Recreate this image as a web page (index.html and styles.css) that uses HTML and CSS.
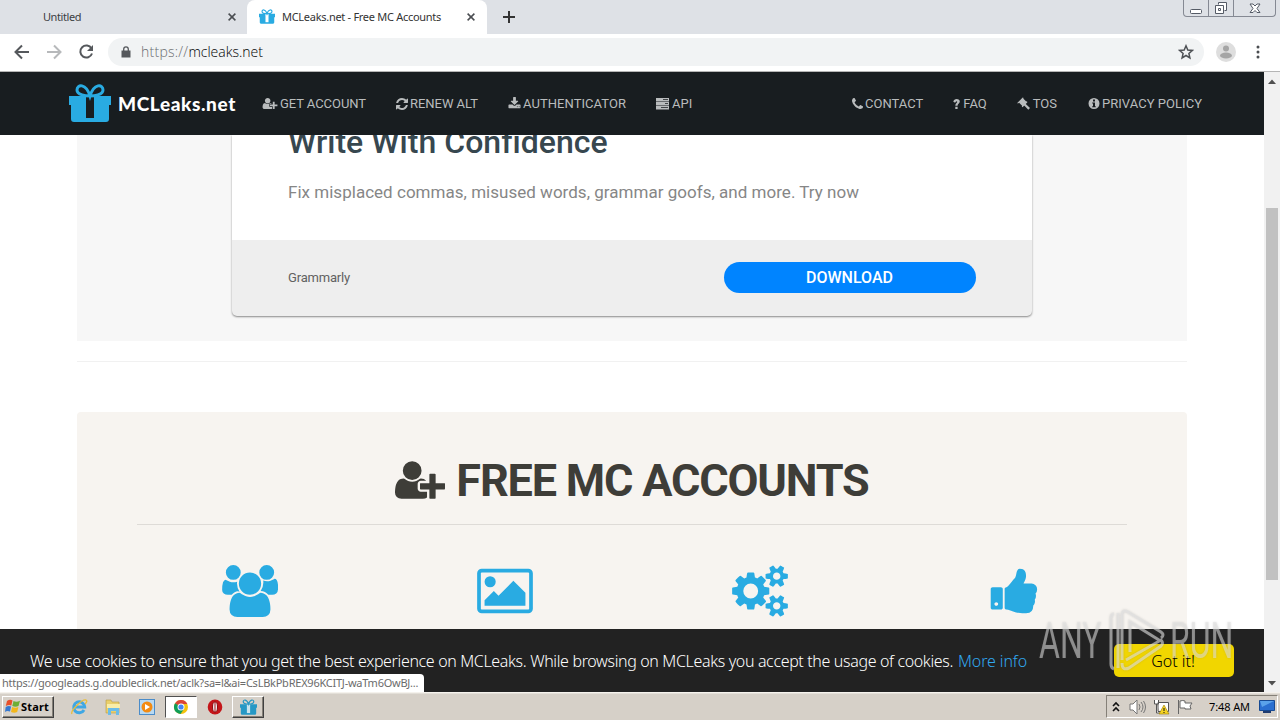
FILE: index.html
```html
<!DOCTYPE html>
<html lang="en"><head><meta charset="utf-8"><title>MCLeaks.net - Free MC Accounts</title><link rel="stylesheet" href="styles.css"></head>
<body>
<svg class="defs" aria-hidden="true">
<symbol id="userplus" viewBox="0 0 2048 1792"><path d="M704 896q-159 0-271.5-112.5t-112.5-271.5 112.5-271.5 271.5-112.5 271.5 112.5 112.5 271.5-112.5 271.5-271.5 112.5zm960 128h352q13 0 22.5 9.5t9.5 22.5v192q0 13-9.5 22.5t-22.5 9.5h-352v352q0 13-9.5 22.5t-22.5 9.5h-192q-13 0-22.5-9.5t-9.5-22.5v-352h-352q-13 0-22.5-9.5t-9.5-22.5v-192q0-13 9.5-22.5t22.5-9.5h352v-352q0-13 9.5-22.5t22.5-9.5h192q13 0 22.5 9.5t9.5 22.5v352zm-736 224q0 52 38 90t90 38h256v238q-68 50-171 50h-874q-121 0-194-69t-73-190q0-53 3.5-103.5t14-109 26.5-108.5 43-97.5 62-81 85.5-53.5 111.5-20q19 0 39 17 79 61 154.500 91.500t164.500 30.500 164.500-30.500 154.500-91.500q20-17 39-17 132 0 217 96h-223q-52 0-90 38t-38 90v192z"/></symbol>
<symbol id="gift" viewBox="0 0 42 38"><path fill="currentColor" d="M0 12h17v4h8v-4h17v9h-2v14q0 3-3 3H5q-3 0-3-3V21H0z"/><path d="M17 13h8v21h-8z" class="ribbon"/><path d="M21 12C17 12 8 11 8 6 8 0 17-1 21 12C25-1 34 0 34 6 34 11 25 12 21 12z" fill="none" stroke="currentColor" stroke-width="3"/></symbol>
</svg>
<header class="tabs">
  <div class="tab idle"><span class="t-untitled">Untitled</span><svg class="close" viewBox="0 0 8 8"><path d="M.6.6l6.800 6.800M7.400.6L.6 7.400"/></svg></div>
  <div class="tab active"><svg class="fav"><use href="#gift"/></svg><span class="t-title">MCLeaks.net - Free MC Accounts</span><svg class="close" viewBox="0 0 8 8"><path d="M.6.6l6.800 6.800M7.400.6L.6 7.400"/></svg></div>
  <svg class="plus" viewBox="0 0 12 12"><path d="M6 0v12M0 6h12"/></svg>
  <div class="winbtns">
    <div><svg width="12" height="14"><rect x=".5" y="8.500" width="11" height="4" rx="1"/></svg></div>
    <div><svg width="14" height="14"><path d="M4.500 3.500v-2h8v8h-2M1.500 4.500h8v8h-8zM4.500 7.500h2v2h-2z"/></svg></div>
    <div class="wide"><svg width="12" height="14"><path d="M1 3h3l2 2 2-2h3L8 7.500l3 4H8l-2-2-2 2H1l3-4z"/></svg></div>
  </div>
</header>
<div class="toolbar">
  <svg class="nav-ic" width="16" height="16" viewBox="0 0 16 16"><path d="M15 8H2M8 1.500L1.500 8 8 14.500"/></svg>
  <svg class="nav-ic dim" width="16" height="16" viewBox="0 0 16 16"><path d="M1 8h13M8 1.500L14.500 8 8 14.500"/></svg>
  <svg class="nav-ic" width="16" height="16" viewBox="0 0 16 16"><path d="M13.500 4.500A6 6 0 1 0 14 9.500"/><path class="solid" d="M15 1v6H9z"/></svg>
  <div class="omni"><svg class="lock" width="10" height="12" viewBox="0 0 10 12"><path d="M.5 4.500h9v7h-9z"/><path class="line" d="M2.700 5V3.200a2.300 2.300 0 0 1 4.600 0V5"/></svg><span class="t-url"><i>https://</i>mcleaks.net</span>
  <svg class="star" width="16" height="16" viewBox="0 0 16 16"><path d="M8 1.800l1.800 4.200 4.500.4-3.400 3 1 4.500L8 11.500l-3.900 2.400 1-4.500-3.400-3 4.500-.4z"/></svg></div>
  <svg class="avatar" width="20" height="20" viewBox="0 0 20 20"><circle cx="10" cy="10" r="10" fill="#dedede"/><circle cx="10" cy="6.500" r="3" fill="#a5a5a5"/><ellipse cx="10" cy="13.500" rx="6" ry="3" fill="#a5a5a5"/></svg>
  <svg class="dots" width="4" height="14" viewBox="0 0 4 14"><circle cx="2" cy="2" r="1.500"/><circle cx="2" cy="7" r="1.500"/><circle cx="2" cy="12" r="1.500"/></svg>
</div>
<main class="view">
 <div class="page">
  <nav class="navbar">
    <svg class="logo"><use href="#gift"/></svg><span class="brand">MCLeaks.net</span>
    <a class="item l1"><svg width="16" height="13"><use href="#userplus"/></svg><span>GET ACCOUNT</span></a>
    <a class="item l2"><svg width="12" height="12" viewBox="128 128 1536 1536"><path d="M1639 1056q0 5-1 7-64 268-268 434.500t-478 166.500q-146 0-282.500-55t-243.500-157l-129 129q-19 19-45 19t-45-19-19-45v-448q0-26 19-45t45-19h448q26 0 45 19t19 45-19 45l-137 137q71 66 161 102t187 36q134 0 250-65t186-179q11-17 53-117 8-23 30-23h192q13 0 22.500 9.500t9.500 22.500zm25-800v448q0 26-19 45t-45 19h-448q-26 0-45-19t-19-45 19-45l138-138q-148-137-349-137-134 0-250 65t-186 179q-11 17-53 117-8 23-30 23h-199q-13 0-22.500-9.500t-9.500-22.500v-7q65-268 270-434.500t480-166.500q146 0 284 55.500t245 156.500l130-129q19-19 45-19t45 19 19 45z"/></svg><span>RENEW ALT</span></a>
    <a class="item l3"><svg width="13" height="13" viewBox="0 0 1792 1792"><path d="M1344 1344q0-26-19-45t-45-19-45 19-19 45 19 45 45 19 45-19 19-45zm256 0q0-26-19-45t-45-19-45 19-19 45 19 45 45 19 45-19 19-45zm128-224v320q0 40-28 68t-68 28h-1472q-40 0-68-28t-28-68v-320q0-40 28-68t68-28h465l135 136q58 56 136 56t136-56l136-136h464q40 0 68 28t28 68zm-325-569q17 41-14 70l-448 448q-18 19-45 19t-45-19l-448-448q-31-29-14-70 17-39 59-39h256v-448q0-26 19-45t45-19h256q26 0 45 19t19 45v448h256q42 0 59 39z"/></svg><span>AUTHENTICATOR</span></a>
    <a class="item l4"><svg width="13" height="13" viewBox="0 0 13 13"><path fill-rule="evenodd" d="M0 1h13v3.400H0zM0 5h13v3.400H0zM0 9h13v3.400H0zM7 2.300v.8h5v-.8zM9 6.300v.8h3v-.8zM5 10.300v.8h7v-.8z"/></svg><span>API</span></a>
    <a class="item r1"><svg width="11" height="12" viewBox="192 128 1408 1536"><path d="M1600 1240q0 27-10 70.500t-21 68.500q-21 50-122 106-94 51-186 51-27 0-53-3.500t-57.500-12.500-47-14.500-55.500-20.500-49-18q-98-35-175-83-127-79-264-216t-216-264q-48-77-83-175-3-9-18-49t-20.500-55.500-14.500-47-12.500-57.500-3.500-53q0-92 51-186 56-101 106-122 25-11 68.500-21t70.500-10q14 0 21 3 18 6 53 76 11 19 30 54t35 63.500 31 53.500q3 4 17.500 25t21.500 35.500 7 28.500q0 20-28.500 50t-62 55-62 53-28.500 46q0 9 5 22.500t8.500 20.500 14 24 11.500 19q76 137 174 235t235 174q2 1 19 11.500t24 14 20.500 8.500 22.500 5q18 0 46-28.500t53-62 55-62 50-28.500q14 0 28.500 7t35.500 21.500 25 17.500q25 15 53.500 31t63.500 35 54 30q70 35 76 53 3 7 3 21z"/></svg><span>CONTACT</span></a>
    <a class="item r2"><svg width="7" height="13" viewBox="0 0 7 13"><path d="M2.300 9.800h2.300v2.200H2.300zM.3 4.800Q1 2 3.600 2 6.800 2.100 6.800 4.600 6.800 6 5.300 7 4.600 7.500 4.600 8.800H2.300Q2.200 7 3.500 6.100 4.500 5.300 4.100 4.500 3 3.700 2.100 5.800z"/></svg><span>FAQ</span></a>
    <a class="item r3"><svg width="13" height="13" viewBox="0 0 13 13"><path d="M0 6.200L5.700.5l1 .5-.5.6 3 3 .7-.4.500 1-4.800 5-.8-.7.300-.7-3-3-.7.500zM8 6.200l5 4.700-1.700 1.800-4.800-5z"/></svg><span>TOS</span></a>
    <a class="item r4"><svg width="12" height="13" viewBox="0 0 12 13"><path fill-rule="evenodd" d="M6 1a5.500 5.500 0 1 1 0 11A5.500 5.500 0 0 1 6 1zM5 2.500v2h2v-2zM4.200 5.400v1H5v2.800h-.8v1h3.600v-1H7V5.400z"/></svg><span>PRIVACY POLICY</span></a>
  </nav>
  <section class="ad"><div class="card"><div class="copy"><h2>Write With Confidence</h2><p>Fix misplaced commas, misused words, grammar goofs, and more. Try now</p></div>
  <div class="foot"><span class="adv">Grammarly</span><div class="dl">DOWNLOAD</div></div></div></section>
  <hr class="rule">
  <section class="jumbo">
    <h1><svg><use href="#userplus"/></svg><span>FREE MC ACCOUNTS</span></h1>
    <div class="cols">
      <div><svg width="56" height="52" viewBox="0 0 1920 1792"><path d="M593 896q-162 5-265 128h-134q-82 0-138-40.500t-56-118.500q0-353 124-353 6 0 43.500 21t97.500 42.500 119 21.500q67 0 133-23-5 37-5 66 0 159 93 293zm1071 637q0 120-73 189.500t-194 69.500h-874q-121 0-194-69.500t-73-189.500q0-53 3.500-103.500t14-109 26.500-108.500 43-97.500 62-81 85.500-53.500 111.500-20q10 0 43 21.500t73 48 107 48 135 21.500 135-21.500 107-48 73-48 43-21.500q61 0 111.500 20t85.500 53.500 62 81 43 97.500 26.500 108.500 14 109 3.500 103.500zm-1024-1277q0 106-75 181t-181 75-181-75-75-181 75-181 181-75 181 75 75 181zm704 384q0 159-112.500 271.500t-271.500 112.500-271.500-112.500-112.500-271.500 112.500-271.500 271.500-112.500 271.500 112.500 112.500 271.500zm576 225q0 78-56 118.500t-138 40.500h-134q-103-123-265-128 93-134 93-293 0-29-5-66 66 23 133 23 59 0 119-21.500t97.500-42.500 43.500-21q124 0 124 353zm-128-609q0 106-75 181t-181 75-181-75-75-181 75-181 181-75 181 75 75 181z"/></svg></div>
      <div><svg width="56" height="52" viewBox="0 -128 1920 1792"><path d="M640 448q0 80-56 136t-136 56-136-56-56-136 56-136 136-56 136 56 56 136zm1024 384v448h-1408v-192l320-320 160 160 512-512zm96-704h-1600q-13 0-22.500 9.500t-9.500 22.500v1216q0 13 9.500 22.500t22.500 9.500h1600q13 0 22.500-9.500t9.500-22.500v-1216q0-13-9.500-22.500t-22.500-9.500zm160 32v1216q0 66-47 113t-113 47h-1600q-66 0-113-47t-47-113v-1216q0-66 47-113t113-47h1600q66 0 113 47t47 113z"/></svg></div>
      <div><svg width="56" height="52" viewBox="0 0 1920 1792"><path d="M896 896q0-106-75-181t-181-75-181 75-75 181 75 181 181 75 181-75 75-181zm768 512q0-52-38-90t-90-38-90 38-38 90q0 53 37.500 90.500t90.500 37.500 90.500-37.500 37.500-90.500zm0-1024q0-52-38-90t-90-38-90 38-38 90q0 53 37.500 90.500t90.500 37.500 90.500-37.500 37.500-90.500zm-384 421v185q0 10-7 19.500t-16 10.500l-155 24q-11 35-32 76 34 48 90 115 7 11 7 20 0 12-7 19-23 30-82.500 89.500t-78.500 59.500q-11 0-21-7l-115-90q-37 19-77 31-11 108-23 155-7 24-30 24h-186q-11 0-20-7.500t-10-17.500l-23-153q-34-10-75-31l-118 89q-7 7-20 7-11 0-21-8-144-133-144-160 0-9 7-19 10-14 41-53t47-61q-23-44-35-82l-152-24q-10-1-17-9.500t-7-19.500v-185q0-10 7-19.500t16-10.500l155-24q11-35 32-76-34-48-90-115-7-11-7-20 0-12 7-20 22-30 82-89t79-59q11 0 21 7l115 90q34-18 77-32 11-108 23-154 7-24 30-24h186q11 0 20 7.500t10 17.500l23 153q34 10 75 31l118-89q8-7 20-7 11 0 21 8 144 133 144 160 0 8-7 19-12 16-42 54t-45 60q23 48 34 82l152 23q10 2 17 10.500t7 19.500zm640 533v140q0 16-149 31-12 27-30 52 51 113 51 138 0 4-4 7-122 71-124 71-8 0-46-47t-52-68q-20 2-30 2t-30-2q-14 21-52 68t-46 47q-2 0-124-71-4-3-4-7 0-25 51-138-18-25-30-52-149-15-149-31v-140q0-16 149-31 13-29 30-52-51-113-51-138 0-4 4-7 4-2 35-20t59-34 30-16q8 0 46 46.500t52 67.500q20-2 30-2t30 2q51-71 92-112l6-2q4 0 124 70 4 3 4 7 0 25-51 138 17 23 30 52 149 15 149 31zm0-1024v140q0 16-149 31-12 27-30 52 51 113 51 138 0 4-4 7-122 71-124 71-8 0-46-47t-52-68q-20 2-30 2t-30-2q-14 21-52 68t-46 47q-2 0-124-71-4-3-4-7 0-25 51-138-18-25-30-52-149-15-149-31v-140q0-16 149-31 13-29 30-52-51-113-51-138 0-4 4-7 4-2 35-20t59-34 30-16q8 0 46 46.500t52 67.500q20-2 30-2t30 2q51-71 92-112l6-2q4 0 124 70 4 3 4 7 0 25-51 138 17 23 30 52 149 15 149 31z"/></svg></div>
      <div><svg class="thumbup" width="52" height="52" viewBox="0 0 1792 1792"><path d="M384 1344q0-26-19-45t-45-19q-27 0-45.500 19t-18.500 45q0 27 18.500 45.500t45.500 18.500q26 0 45-18.500t19-45.500zm160-512v640q0 26-19 45t-45 19h-288q-26 0-45-19t-19-45v-640q0-26 19-45t45-19h288q26 0 45 19t19 45zm1184 0q0 86-55 149 15 44 15 76 3 76-43 137 17 56 0 117-15 57-54 94 9 112-49 181-64 76-197 78h-129q-66 0-144-15.500t-121.500-29-120.500-39.500q-123-43-158-44-26-1-45-19.500t-19-44.500v-641q0-25 18-43.500t43-20.500q24-2 76-59t101-121q68-87 101-120 18-18 31-48t17.500-48.500 13.500-60.500q7-39 12.500-61t19.500-52 34-50q19-19 45-19 46 0 82.500 10.500t60 26 40 40.500 24 45 12 50 5 45 .5 39q0 38-9.500 76t-19 60-27.500 56q-3 6-10 18t-11 22-8 24h277q78 0 135 57t57 135z"/></svg></div>
    </div>
  </section>
  <div class="cookie"><span class="msg">We use cookies to ensure that you get the best experience on MCLeaks. While browsing on MCLeaks you accept the usage of cookies.</span><a class="more">More info</a><button>Got it!</button></div>
 </div>
 <aside class="scroll"><svg width="8" height="5"><path d="M0 5l4-4.500L8 5z"/></svg><div class="thumb"></div><svg width="8" height="5"><path d="M0 0h8L4 4.500z"/></svg></aside>
 <div class="status"><span>https://googleads.g.doubleclick.net/aclk?sa=l&amp;ai=CsLBkPbREX96KCITJ-waTm6OwBJ...</span></div>
 <div class="mark"><span class="any">ANY</span><svg width="56" height="66" viewBox="0 0 56 66"><path d="M5 6q-3 0-3 4v46q0 4 3 5M9 5v55M13 52V6Q14 1 19 4L52 24q4 3 0 6M21 44V14L50 32M13 55q0 8 7 5L52 38q3-3 0-6L17 52"/></svg><span class="run">RUN</span></div>
</main>
<footer class="task">
  <div class="start"><svg width="16" height="15" viewBox="0 0 16 15"><path fill="#e8502a" d="M2 2q3-2 5.500-.5L6.300 6.500Q4 5.300.8 7z"/><path fill="#6dae35" d="M8.500 2q3 1.500 6.500-.3L13.500 7q-3 1.600-6.200 0z"/><path fill="#3578d0" d="M.7 8q3-1.700 5.400-.4L5 12.500Q2 11.300 0 13z"/><path fill="#f3b71b" d="M7.200 8q3 1.500 6.200 0l-1.200 5q-3 1.600-6.200 0z"/></svg><b>Start</b></div>
  <div class="launch">
   <svg viewBox="0 0 18 18"><path fill="none" stroke="#3fa7e4" stroke-width="3" d="M14 12a5.500 5.500 0 1 1 .7-3H4.500"/><path fill="none" stroke="#e9bd3b" stroke-width="1.300" d="M2 16C0 13 12 1 16 2q2 1-1 4"/></svg>
   <svg viewBox="0 0 18 18"><path fill="#e9cf6c" stroke="#b99c45" stroke-width=".6" d="M2 2h5l1 2h7v11H2z"/><path fill="#f9eda8" d="M3 6h13v4H3z"/><path fill="#6bbce8" d="M4 17V10h11v7h-3v-4H7v4z"/></svg>
   <svg viewBox="0 0 18 18"><rect x="1.500" y="1.500" width="15" height="15" fill="#b8d9f2" stroke="#4b8cc9"/><circle cx="9" cy="9" r="5.500" fill="#f38b12"/><path fill="#fff" d="M7 6l5 3-5 3z"/></svg>
   <div class="pressed"><svg viewBox="0 0 18 18"><circle cx="9" cy="9" r="7" fill="#f4c20d"/><path fill="#db4437" d="M9 9L3 5.500A7 7 0 0 1 15.300 6H9z"/><path fill="#0f9d58" d="M3 5.300A7 7 0 0 0 8.500 16L12 11z"/><circle cx="9" cy="9" r="3.500" fill="#fff"/><circle cx="9" cy="9" r="2.600" fill="#4285f4"/></svg></div>
   <svg viewBox="0 0 18 18"><ellipse cx="9" cy="9" rx="7.300" ry="7.500" fill="#c41519"/><ellipse cx="9" cy="9" rx="2.500" ry="5" fill="#eee" stroke="#8c080c"/><path d="M9 5v8" stroke="#a21014" stroke-width="1"/></svg>
   <div class="raised"><svg class="tg"><use href="#gift"/></svg></div>
  </div>
  <div class="tray"><svg width="8" height="12" viewBox="0 0 8 12"><path d="M1 5l3-3 3 3M1 10l3-3 3 3" fill="none" stroke="#111" stroke-width="1.600"/></svg>
  <svg class="g1" width="18" height="16" viewBox="0 0 18 16"><path fill="#fff" stroke="#777" d="M1 5h3l4-4v14l-4-4H1z"/><path fill="none" stroke="#777" d="M10 5q2 3 0 6M12 3q4 5 0 10M14.500 2q4 6 0 12"/></svg>
  <svg class="g2" width="17" height="16" viewBox="0 0 17 16"><path fill="#fff" stroke="#555" d="M5 3.500h10.500v9H5zM1.500 1v4h4V1M3.500 5v9h4"/><path fill="#f6d423" stroke="#9a7b00" stroke-width=".6" d="M11 6l5 9H6z"/><path d="M11 9v3m0 1v1" stroke="#111"/></svg>
  <svg class="g3" width="17" height="16" viewBox="0 0 17 16"><path fill="#fff" stroke="#666" d="M1.500 1v14M3 2q3-1 5 0v2h7l-2 3 1 3H8V9H3z"/></svg>
  <span class="clock">7:48 AM</span>
  <svg class="g4" width="16" height="13" viewBox="0 0 16 13"><path fill="#2a6fd0" stroke="#174a93" d="M.5.5h15v10H.5z"/><path fill="#5aa2ea" d="M1 1h14L3 7z"/><path fill="#203c70" d="M4 11h8v2H4z"/></svg></div>
</footer>
</body></html>
```
FILE: styles.css
```css
*{box-sizing:border-box}
body{margin:0;width:1280px;height:720px;overflow:hidden;display:flex;flex-direction:column;background:#fff;font-family:Roboto,"Liberation Sans",sans-serif;color:#333}
svg{display:block;flex:none}
span,a,b,h2,p{white-space:nowrap}
.defs{position:absolute;width:0;height:0}
.ribbon{fill:var(--ribbon,#fff)}
.tabs{height:34px;flex:none;background:#dee1e6;display:flex;align-items:center;font:11px "Noto Sans",sans-serif;color:#3c4043;padding-bottom:1px}
.tab{height:33px;display:flex;align-items:center}
.idle{width:247px;padding-left:43px;padding-right:11px;justify-content:space-between}
.active{position:relative;width:240px;height:34px;margin-bottom:-1px;background:#fff;border-radius:8px 8px 0 0;padding:0 12px 1px;color:#333}
.active .close{margin-left:auto}
.t-untitled{letter-spacing:-.43px}
.t-title{letter-spacing:-.285px}
.fav{width:16px;height:15px;color:#29abe2;margin-right:7px}
.close{width:8px;height:8px;fill:none;stroke:#4a4d51;stroke-width:1.500}
.plus{width:12px;height:12px;margin-left:16px;fill:none;stroke:#333;stroke-width:2}
.winbtns{margin-left:auto;margin-right:4px;align-self:flex-start;display:flex;height:17px;border:1px solid #858993;border-top:0;border-radius:0 0 4px 4px}
.winbtns div{width:25px;border-right:1px solid #858993;display:grid;place-items:center}
.winbtns .wide{width:41px;border:0}
.winbtns svg{fill:#fff;stroke:#555b66}
.toolbar{height:38px;flex:none;display:flex;align-items:center;padding:0 20px 2px 14px;border-bottom:1px solid #b5b5b5}
.nav-ic{margin-right:16px;fill:none;stroke:#55585c;stroke-width:2}
.nav-ic .solid{fill:#55585c;stroke:none}
.toolbar .dim{stroke:#b7b9bb}
.omni{height:28px;width:1096px;margin-left:-2px;border-radius:14px;background:#f1f3f4;display:flex;align-items:center;padding:0 10px 0 13px}
.lock{fill:#55585c;margin-right:10px}
.lock .line{fill:none;stroke:#55585c;stroke-width:1.300}
.t-url{font:300 14px "Open Sans","Noto Sans",sans-serif;color:#000}
.t-url i{font-style:normal;color:#6a6d70;letter-spacing:.25px}
.star{margin-left:auto;fill:none;stroke:#4e5155;stroke-width:1.500}
.avatar{margin-left:12px}
.dots{margin-left:auto;fill:#4a4d51}
.view{position:relative;height:620px;flex:none;display:flex}
.page{position:relative;width:1264px;height:620px;overflow:hidden}
.navbar{position:relative;z-index:2;height:63px;background:#181d20;display:flex;align-items:center;color:#b9bcbd;font-size:13px;padding-left:69px}
.logo{width:42px;height:38px;color:#29abe2;--ribbon:#181d20;margin-bottom:2px}
.brand{font:900 19px Lato,sans-serif;letter-spacing:.6px;color:#fff;margin-left:7px;width:118px}
.item{display:flex;align-items:center;gap:2px;margin-right:30px}
.item svg{fill:currentColor}
.l1{margin-left:26px;letter-spacing:-.06px}
.l2{letter-spacing:-.036px}
.l3{letter-spacing:.056px}
.l4{margin-right:0;gap:3px}
.r1{margin-left:auto}
.r2{gap:3px}
.r3{gap:3px;margin-right:31px}
.r4{margin-right:62px;letter-spacing:.042px}
.ad{width:1110px;height:206px;margin-left:77px;background:#f7f7f7;padding-left:155px}
.card{width:800px;height:181px;background:#eee;border-radius:0 0 5px 5px;box-shadow:0 1px 2px rgba(0,0,0,.45)}
.copy{height:105px;background:#fff;padding-left:56px}
.copy h2{margin:0 0 0;padding:0;line-height:26px;height:38px;font:500 32px/14px Roboto,sans-serif;letter-spacing:.039px;color:#37474f}
.copy p{margin:7px 0 0;font:17px/24px Roboto,sans-serif;letter-spacing:.023px;color:#868686}
.foot{height:76px;display:flex;align-items:center;justify-content:space-between;padding:0 56px 1px}
.adv{font-size:13px;letter-spacing:-.186px;color:#616161}
.dl{width:252px;height:31px;border-radius:16px;background:#0084ff;color:#fff;font:500 16px/31px Roboto,sans-serif;text-align:center;padding-right:1px}
.rule{width:1110px;margin:20px 0 0 77px;border:0;border-top:1px solid #f1f1f1}
.jumbo{width:1110px;height:300px;margin:50px 0 0 77px;background:#f7f4f0;border-radius:4px;padding-top:45px}
.jumbo h1{margin:0 60px;height:68px;border-bottom:1px solid #dedbd7;display:flex;justify-content:center;font:700 45px/48px Roboto,sans-serif;letter-spacing:-1.180px;color:#3e3d38}
.jumbo h1 svg{width:50px;height:44px;fill:#3e3d38;margin:1px 11px 0 0}
.cols{margin:40px 45px 0;display:grid;grid-template-columns:repeat(4,1fr);justify-items:center}
.cols svg{fill:#29abe2}
.cols .thumbup{margin-right:3px}
.cookie{position:absolute;left:0;right:0;bottom:0;height:63px;background:#222;color:#fff;display:flex;align-items:center;padding:0 30px;font:300 16px "Noto Sans","Open Sans",sans-serif}
.msg{letter-spacing:-.350px}
.more{color:#31a8f0;margin-left:5px;letter-spacing:-.115px}
.cookie button{margin-left:auto;width:120px;height:33px;border:0;border-radius:5px;background:#f1d600;color:#000;font:inherit;padding:0 2px 0 0}
.scroll{width:16px;background:#f1f1f1;display:flex;flex-direction:column;align-items:center;padding:7px 0 6px}
.scroll svg{fill:#505050}
.thumb{width:12px;height:372px;background:#c1c1c1;margin:124px 0 auto}
.status{position:absolute;left:0;bottom:0;width:424px;height:18px;background:#fff;border-radius:0 4px 0 0;padding-left:2px;font:11px/18px "Noto Sans",sans-serif;letter-spacing:-.240px;color:#6b6b6b}
.mark{position:absolute;left:1039px;top:536px;display:flex;align-items:center;color:rgba(225,225,225,.55);font:400 50px Roboto,sans-serif;filter:drop-shadow(0 0 1px rgba(90,90,90,.3))}
.mark svg{fill:none;stroke:rgba(225,225,225,.6);stroke-width:3}
.any,.run{width:70px;transform:scaleX(.64);transform-origin:0 50%}
.run{width:64px;margin-left:5px}
.task{height:28px;flex:none;background:#d6d0c8;border-top:1px solid #f5f2ed;box-shadow:inset 0 1px #e3dfd8;display:flex;align-items:center;padding:0 2px;font:11px "Noto Sans",sans-serif;color:#000}
.start{width:52px;height:22px;display:flex;align-items:center;gap:2px;padding-left:2px;border:1px solid;border-color:#fff #404040 #404040 #fff;box-shadow:inset -1px -1px #858078}
.start b{margin-left:-2px;letter-spacing:.17px}
.launch{display:flex;align-items:center;margin-left:16px}
.launch svg{width:18px;height:18px;margin-right:16px}
.pressed,.raised{width:32px;height:22px;display:grid;place-items:center;border:1px solid;border-color:#505050 #fff #fff #505050;background:#fff}
.launch div svg{margin:0}
.pressed{margin-right:9px;margin-left:-7px}
.raised{margin-left:-8px;background:#d6d0c8;border-color:#fff #404040 #404040 #fff;box-shadow:inset -1px -1px #858078}
.launch .tg{width:17px;height:16px;color:#2698c5;--ribbon:#c9e4ee}
.tray{margin-left:auto;width:172px;height:23px;border:1px solid;border-color:#858078 #fff #fff #858078;display:flex;align-items:center;padding-left:5px}
.g1{margin-left:9px}
.g2{margin-left:6px}
.g3{margin-left:7px}
.clock{margin-left:15px;letter-spacing:-.1px}
.g4{margin-left:9px}
```
